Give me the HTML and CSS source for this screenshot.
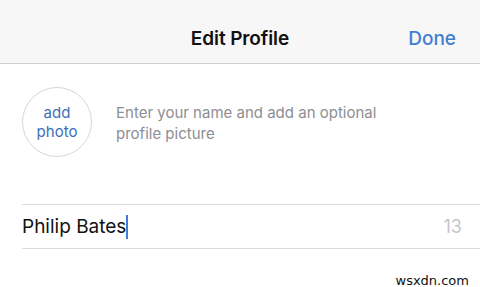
FILE: index.html
```html
<!DOCTYPE html>
<html>
<head>
<meta charset="utf-8">
<link rel="stylesheet" href="styles.css">
</head>
<body>
<div class="screen">
  <header class="navbar">
    <div class="nav-side"></div>
    <div class="nav-title">Edit Profile</div>
    <div class="nav-side nav-done">Done</div>
  </header>
  <section class="profile">
    <div class="avatar"><span>add<br>photo</span></div>
    <p class="hint">Enter your name and add an optional<br>profile picture</p>
  </section>
  <div class="field">
    <div class="name">Philip Bates<span class="caret"></span></div>
    <div class="count">13</div>
  </div>
  <div class="footer"><span class="mark">wsxdn.com</span></div>
</div>
</body>
</html>
```

FILE: styles.css
```css
html, body {
  margin: 0;
  padding: 0;
  background: #ffffff;
}
.screen {
  width: 480px;
  height: 287px;
  overflow: hidden;
  font-family: Inter, "Liberation Sans", Arial, sans-serif;
}
.navbar {
  background: #f7f7f7;
  border-bottom: 1px solid #cfcfcf;
  display: flex;
  align-items: center;
  padding: 13px 24px 0 24px;
  box-sizing: border-box;
  height: 64px;
}
.nav-side {
  width: 80px;
}
.nav-title {
  flex: 1;
  text-align: center;
  font-size: 19px;
  font-weight: 600;
  color: #111;
  letter-spacing: -0.1px;
}
.nav-done {
  text-align: right;
  color: #3f7ed0;
  font-size: 19px;
  font-weight: 500;
}
.profile {
  display: flex;
  padding: 23px 0 0 22px;
  height: 116px;
  box-sizing: border-box;
  align-items: flex-start;
}
.avatar {
  width: 68px;
  height: 68px;
  border: 1px solid #d6d6d6;
  border-radius: 50%;
  display: flex;
  align-items: center;
  justify-content: center;
  text-align: center;
  color: #3e6fb6;
  font-size: 15px;
  line-height: 19px;
  flex-shrink: 0;
}
.hint {
  margin: 15px 0 0 24px;
  color: #8e8e93;
  font-size: 15px;
  line-height: 21px;
}
.field {
  margin: 24px 0 0 22px;
  border-top: 1px solid #dcdcdc;
  border-bottom: 1px solid #dcdcdc;
  height: 43px;
  display: flex;
  align-items: center;
  justify-content: space-between;
  padding-right: 18px;
}
.name {
  font-size: 19px;
  color: #111;
  display: flex;
  align-items: center;
}
.caret {
  display: inline-block;
  width: 2px;
  height: 24px;
  background: #3f7ed0;
}
.count {
  font-size: 18px;
  color: #c4c4c8;
}
.footer {
  display: flex;
  justify-content: flex-end;
  padding: 23px 11px 0 0;
  line-height: 18px;
}
.mark {
  font-family: "DejaVu Sans", sans-serif;
  font-size: 13px;
  color: #111;
}
```
